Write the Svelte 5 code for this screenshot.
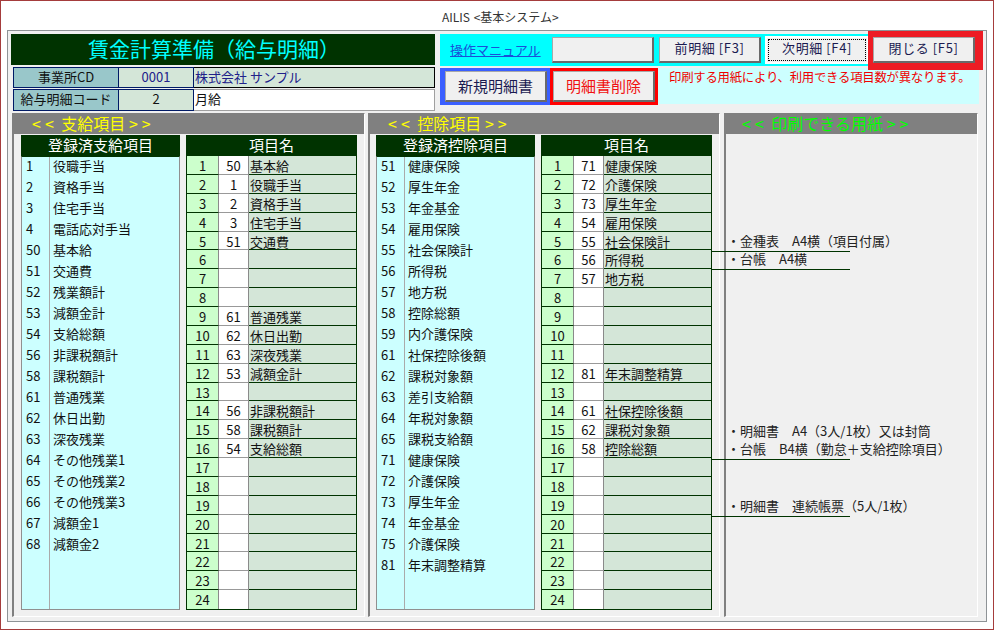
<script>
  const pay = [[1,'役職手当'],[2,'資格手当'],[3,'住宅手当'],[4,'電話応対手当'],[50,'基本給'],[51,'交通費'],[52,'残業額計'],[53,'減額金計'],[54,'支給総額'],[56,'非課税額計'],[58,'課税額計'],[61,'普通残業'],[62,'休日出勤'],[63,'深夜残業'],[64,'その他残業1'],[65,'その他残業2'],[66,'その他残業3'],[67,'減額金1'],[68,'減額金2']];
  const ded = [[51,'健康保険'],[52,'厚生年金'],[53,'年金基金'],[54,'雇用保険'],[55,'社会保険計'],[56,'所得税'],[57,'地方税'],[58,'控除総額'],[59,'内介護保険'],[61,'社保控除後額'],[62,'課税対象額'],[63,'差引支給額'],[64,'年税対象額'],[65,'課税支給額'],[71,'健康保険'],[72,'介護保険'],[73,'厚生年金'],[74,'年金基金'],[75,'介護保険'],[81,'年末調整精算']];
  const paySel = {1:[50,'基本給'],2:[1,'役職手当'],3:[2,'資格手当'],4:[3,'住宅手当'],5:[51,'交通費'],9:[61,'普通残業'],10:[62,'休日出勤'],11:[63,'深夜残業'],12:[53,'減額金計'],14:[56,'非課税額計'],15:[58,'課税額計'],16:[54,'支給総額']};
  const dedSel = {1:[71,'健康保険'],2:[72,'介護保険'],3:[73,'厚生年金'],4:[54,'雇用保険'],5:[55,'社会保険計'],6:[56,'所得税'],7:[57,'地方税'],12:[81,'年末調整精算'],14:[61,'社保控除後額'],15:[62,'課税対象額'],16:[58,'控除総額']};
  const nums = Array.from({length:24},(_,i)=>i+1);
  const sections = [
    {cls:'first', title:'支給項目', listTitle:'登録済支給項目', list:pay, sel:paySel},
    {cls:'second', title:'控除項目', listTitle:'登録済控除項目', list:ded, sel:dedSel}
  ];
</script>

<div class="window">
  <div class="titlebar">AILIS &lt;基本システム&gt;</div>
  <div class="form">
    <div class="top">
      <div class="left">
        <div class="title">賃金計算準備（給与明細）</div>
        <div class="info one">
          <div class="lab">事業所CD</div>
          <div class="val navy">0001</div>
          <div class="name navy">株式会社 サンプル</div>
        </div>
        <div class="info two">
          <div class="lab">給与明細コード</div>
          <div class="val">2</div>
          <div class="name">月給</div>
        </div>
      </div>
      <div class="right">
        <div class="row1">
          <div class="cyan">
            <span class="link">操作マニュアル</span>
            <button class="btn blank"></button>
            <button class="btn nav">前明細 [F3]</button>
            <button class="btn nav focus"><span>次明細 [F4]</span></button>
          </div>
          <div class="closebox"><button class="btn nav">閉じる [F5]</button></div>
        </div>
        <div class="row2">
          <div class="box blue"><button class="btn big">新規明細書</button></div>
          <div class="box red"><button class="btn big redtext">明細書削除</button></div>
          <div class="notice">印刷する用紙により、利用できる項目数が異なります。</div>
        </div>
      </div>
    </div>

    <div class="main">
      {#each sections as s}
        <section class="panel {s.cls}">
          <h2><span class="br">&lt;&lt;</span> {s.title} <span class="br">&gt;&gt;</span></h2>
          <div class="cols">
            <div class="listcol">
              <div class="head">{s.listTitle}</div>
              <div class="list">
                {#each s.list as [n, t]}
                  <div class="li"><span class="ln">{n}</span><span>{t}</span></div>
                {/each}
              </div>
            </div>
            <div class="tablecol">
              <div class="head">項目名</div>
              <div class="table">
                {#each nums as n}
                  <div class="tr">
                    <div class="c1">{n}</div>
                    <div class="c2">{s.sel[n] ? s.sel[n][0] : ''}</div>
                    <div class="c3">{s.sel[n] ? s.sel[n][1] : ''}</div>
                  </div>
                {/each}
              </div>
            </div>
          </div>
        </section>
      {/each}
      <section class="panel third">
        <h2><span class="br">&lt;&lt;</span> 印刷できる用紙 <span class="br">&gt;&gt;</span></h2>
        <div class="notes">
          <div class="g1">
            <p>・金種表　A4横（項目付属）</p>
            <p>・台帳　A4横</p>
          </div>
          <div class="g2">
            <p>・明細書　A4（3人/1枚）又は封筒</p>
            <p>・台帳　B4横（勤怠＋支給控除項目）</p>
          </div>
          <div class="g3">
            <p>・明細書　連続帳票（5人/1枚）</p>
          </div>
        </div>
      </section>
      <i class="rule" style="top:138px"></i>
      <i class="rule" style="top:156px"></i>
      <i class="rule" style="top:346px"></i>
      <i class="rule" style="top:403px"></i>
    </div>
  </div>
</div>

<style>
  :global(body) { margin: 0; background: #fff; }
  .window {
    width: 994px; height: 630px; box-sizing: border-box;
    border: 1px solid #a53c3c;
    font-family: "Noto Sans CJK JP", "Noto Sans", sans-serif;
    font-size: 13px; color: #111; overflow: hidden; background: #fff;
  }
  .titlebar {
    height: 29px; box-sizing: border-box; padding: 8px 0 0 441px;
    font-size: 12px; line-height: 16px; color: #333; word-spacing: 1px;
  }
  .form {
    margin-left: 6px; width: 980px; height: 592px; box-sizing: border-box;
    border: 1px solid #8e9396; background: #f0f0f0; padding-top: 3px;
  }
  .top { display: flex; height: 79px; }
  .left { width: 424px; margin-left: 3px; }
  .title {
    height: 31px; background: #003300; color: #00ffff;
    font-size: 21px; line-height: 28px; padding-left: 77px; box-sizing: border-box;
  }
  .info {
    display: grid; grid-template-columns: 106px 75px 241px; margin-left: 2px;
    height: 21px; line-height: 17px; box-sizing: border-box;
  }
  .info.one { margin-top: 2px; }
  .info.two { margin-top: 1px; height: 22px; line-height: 18px; }
  .info > div { box-sizing: border-box; border: 1px solid #000; border-left: 0; }
  .lab { background: #99c7ca; text-align: center; border-left: 1px solid #001a66 !important; border-color: #001a66 !important; }
  .val { background: #d4e6d8; text-align: center; border-color: #001a66 !important; }
  .name { background: #d4e6d8; padding-left: 1px; }
  .two .name { background: #fff; border-color: #a0a0a0; }
  .navy { color: #20208a; }
  .right { margin-left: 5px; width: 543px; }
  .row1 { display: flex; height: 32px; }
  .cyan {
    width: 428px; height: 32px; background: #00ffff; display: flex; align-items: flex-start;
    padding-top: 3px; box-sizing: border-box; gap: 5px;
  }
  .link {
    width: 107px; padding-left: 10px; box-sizing: border-box;
    color: #1a50d8; text-decoration: underline; line-height: 25px; font-size: 13px;
  }
  .btn {
    font-family: inherit; background: #f0f0f0; color: #1a1a50; margin: 0; padding: 0 0 3px;
    border: 1px solid #a8a8a8; border-right: 2px solid #6a6a6a; border-bottom: 2px solid #6a6a6a;
    box-sizing: border-box;
  }
  .blank, .nav { width: 102px; height: 26px; font-size: 13px; line-height: 18px; letter-spacing: 0.6px; }
  .focus { border: 1px solid #fff; outline: 1px solid #fff; display: flex; align-items: stretch; padding: 1px; }
  .focus span { flex: 1; border: 1px dotted #000; line-height: 16px; }
  .closebox {
    position: relative; z-index: 1; margin-top: -3px; height: 39px; width: 115px; box-sizing: border-box;
    background: #ed1c24; padding: 6px 0 0 5px;
  }
  .row2 { display: flex; margin-top: 2px; height: 37px; }
  .box { box-sizing: border-box; height: 37px; padding-top: 3px; }
  .blue { width: 110px; background: #3a5fff; padding-left: 5px; }
  .red { width: 108px; background: #ff0000; padding-left: 3px; }
  .big { width: 102px; height: 31px; font-size: 15px; line-height: 24px; padding: 0 0 1px; }
  .redtext { color: #f01010; }
  .notice {
    width: 321px; height: 36px; background: #ccffff; color: #f00000; font-size: 12.4px;
    box-sizing: border-box; padding: 0 0 0 11px; line-height: 18px; white-space: nowrap; letter-spacing: -0.02em;
  }
  .main { position: relative; display: flex; margin: 0 0 0 4px; height: 504px; }
  .panel {
    box-sizing: border-box; height: 504px; border: 1px solid #fff;
    border-left: 2px solid #808080; border-top-color: #808080;
  }
  .first { width: 353px; margin-right: 3px; }
  .second { width: 352px; margin-right: 4px; }
  .third { width: 254px; }
  h2 {
    margin: 0; height: 20px; background: #808080; color: #ffff00; font-weight: 400;
    font-size: 16px; line-height: 18px; padding-left: 18px; white-space: nowrap;
  }
  .br { letter-spacing: 4px; }
  .third h2 { color: #00ff00; padding-left: 16px; }
  .cols { display: flex; padding: 1px 0 0 7px; gap: 6px; }
  .second .cols { padding-left: 6px; }
  .listcol { width: 159px; }
  .tablecol { width: 171px; }
  .head {
    height: 21px; background: #003300; color: #fff; text-align: center;
    font-size: 15px; line-height: 20px;
  }
  .list {
    position: relative; height: 454px; box-sizing: border-box; background: #ccffff;
    border: 1px solid #909090; border-top: 1px solid #003300;
  }
  .list::before {
    content: ""; position: absolute; left: 27px; top: 0; bottom: 0; width: 1px; background: #aaa;
  }
  .li { height: 21px; line-height: 18px; display: flex; white-space: nowrap; }
  .ln { width: 31px; padding-left: 4px; box-sizing: border-box; }
  .table {
    height: 454px; box-sizing: border-box; display: flex; flex-direction: column;
    border: 1px solid #003300; border-top: 0;
  }
  .tr { flex: 1 1 0; min-height: 0; display: grid; grid-template-columns: 32px 30px 1fr; line-height: 19px; }
  .tr > div { box-sizing: border-box; border-bottom: 1px solid #003300; white-space: nowrap; overflow: hidden; }
  .tr:last-child > div { border-bottom: 0; }
  .c1 { background: #ccffcc; text-align: center; border-right: 1px solid #8a8a8a; }
  .c2 { background: #fff; text-align: center; border-right: 1px solid #8a8a8a; border-bottom-color: #999 !important; }
  .c3 { background: #d4e6d8; padding-left: 1px; }
  .notes { padding: 98px 0 0 1px; }
  p { margin: 0; height: 18px; line-height: 18px; white-space: nowrap; color: #222; }
  .g2 { margin-top: 154px; }
  .g3 { margin-top: 39px; }
  .rule { position: absolute; left: 700px; width: 138px; height: 1px; background: #003300; }
</style>
